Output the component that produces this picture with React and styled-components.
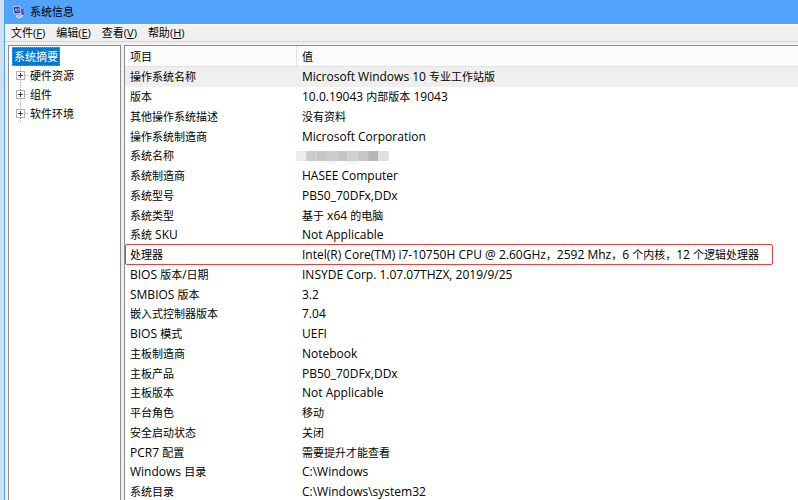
import React from "react";
import styled, { createGlobalStyle } from "styled-components";

const GlobalStyle = createGlobalStyle`
  * {
    box-sizing: border-box;
  }

  body {
    margin: 0;
    overflow: hidden;
    background: #fff;
  }
`

const Desktop = styled.div`
  display: flex;
  height: 100vh;
  overflow: hidden;
  padding-left: 4px;
  background: #cfe0f2;
  color: #000;
  font-family: "Open Sans", "Noto Sans CJK SC", sans-serif;
  font-size: 12px;
  line-height: 16px;
`

const Window = styled.div`
  flex: 1;
  min-width: 0;
  display: flex;
  flex-direction: column;
  border-left: 1px solid #4c9be8;
  background: #f0f0f0;
`

const TitleBar = styled.header`
  display: flex;
  align-items: center;
  gap: 5px;
  height: 24px;
  padding-left: 7px;
  background: #52a3fb;
`

const Title = styled.h1`
  margin: 0;
  font-size: 11px;
  font-weight: 400;
`

const MenuBar = styled.nav`
  display: flex;
  gap: 11px;
  height: 18px;
  padding-left: 6px;
  border-top: 1px solid #f8fbfd;
  border-bottom: 1px solid #d4d4d4;
`

const MenuButton = styled.button`
  padding: 0;
  border: 0;
  background: none;
  color: inherit;
  font: inherit;
  font-size: 11px;
  line-height: 16px;
`

const Panes = styled.div`
  flex: 1;
  min-height: 0;
  display: flex;
  gap: 3px;
  padding: 3px 0 0 3px;
`

const TreePane = styled.aside`
  flex: none;
  width: 113px;
  padding: 1px 3px;
  border: 1px solid #8c8c8c;
  border-bottom: 0;
  background: #fff;
`

const RootItem = styled.button`
  display: block;
  height: 19px;
  padding: 0 1px;
  border: 1px dotted #d08a3c;
  background: #0078d7;
  color: #fff;
  font: inherit;
  font-size: 11px;
  line-height: 17px;
`

const Branches = styled.ul`
  margin: 0;
  padding: 0 0 0 3px;
  list-style: none;
`

const Branch = styled.li`
  display: flex;
  align-items: center;
  gap: 1px;
  height: 19px;
  font-size: 11px;
`

const Expander = styled.button`
  display: flex;
  padding: 0;
  border: 0;
  background: none;
`

const ListPane = styled.main`
  flex: 1;
  min-width: 0;
  overflow: hidden;
  border: 1px solid #8c8c8c;
  border-right: 0;
  border-bottom: 0;
  background: #fff;
`

const Table = styled.table`
  width: 100%;
  border-collapse: separate;
  border-spacing: 0;
  table-layout: fixed;
  text-align: left;
`

const HeadCell = styled.th`
  width: ${props => props.$width || "auto"};
  height: 21px;
  padding: 2px 5px 0;
  border-bottom: 1px solid #e2e2e2;
  border-right: ${props => props.$width ? "1px solid #e0e0e0" : "0"};
  background: #fcfcfc;
  font-weight: 400;
  font-size: 11px;
`

const Row = styled.tr`
  position: relative;
  height: 20px;
  background: ${props => props.$selected ? "#efefef" : "transparent"};

  &:nth-child(4n) {
    height: 19px;
  }
`

const Cell = styled.td`
  padding: 0 5px;
  white-space: nowrap;
  font-size: 11px;
  line-height: 16px;
`

const Latin = styled.span`
  font-size: 12px;
`

const Marker = styled.span`
  position: absolute;
  inset: -1px 25px 0 0;
  border: 1px solid #e8403a;
  border-radius: 2px;
  pointer-events: none;
`

const Mosaic = styled.svg`
  display: block;
  margin-left: -6px;
`

const menus = [
  ["文件", "F"],
  ["编辑", "E"],
  ["查看", "V"],
  ["帮助", "H"],
]

const branches = ["硬件资源", "组件", "软件环境"]

const rows = [
  { item: "操作系统名称", value: "Microsoft Windows 10 专业工作站版", selected: true },
  { item: "版本", value: "10.0.19043 内部版本 19043" },
  { item: "其他操作系统描述", value: "没有资料" },
  { item: "操作系统制造商", value: "Microsoft Corporation" },
  { item: "系统名称", hidden: true },
  { item: "系统制造商", value: "HASEE Computer" },
  { item: "系统型号", value: "PB50_70DFx,DDx" },
  { item: "系统类型", value: "基于 x64 的电脑" },
  { item: "系统 SKU", value: "Not Applicable" },
  { item: "处理器", value: "Intel(R) Core(TM) i7-10750H CPU @ 2.60GHz，2592 Mhz，6 个内核，12 个逻辑处理器", marked: true },
  { item: "BIOS 版本/日期", value: "INSYDE Corp. 1.07.07THZX, 2019/9/25" },
  { item: "SMBIOS 版本", value: "3.2" },
  { item: "嵌入式控制器版本", value: "7.04" },
  { item: "BIOS 模式", value: "UEFI" },
  { item: "主板制造商", value: "Notebook" },
  { item: "主板产品", value: "PB50_70DFx,DDx" },
  { item: "主板版本", value: "Not Applicable" },
  { item: "平台角色", value: "移动" },
  { item: "安全启动状态", value: "关闭" },
  { item: "PCR7 配置", value: "需要提升才能查看" },
  { item: "Windows 目录", value: "C:\\Windows" },
  { item: "系统目录", value: "C:\\Windows\\system32" },
]

const mosaicColors = ["#ececec", "#cbcbcb", "#c6c6c8", "#cdcdce", "#c4c4c6", "#d0d0d3", "#c9c5c1", "#b4b6b9", "#dfe2e4"]

// Latin runs are set one size larger than the Chinese text
const MixedText = ({ text }) => (
  text.split(/([\x20-\x7e]+)/).map((part, i) => (
    i % 2 ? <Latin key={i}>{part}</Latin> : part
  ))
)

const AppIcon = () => (
  <svg width="13" height="14" viewBox="0 0 13 14" aria-hidden="true">
    <path d="M0.500 1.500L8 0.500l1.500 8-7.500 1z" fill="#c9d3ec" />
    <path d="M1.500 2.300l5.800-.8 1.200 6.300-6 .8z" fill="#2b2fa8" />
    <path d="M2.500 6.500l1.500-3 1.500 3.500M6 3l1.300 3.500" stroke="#a9c4ff" fill="none" />
    <path d="M9 3.500l2.500 1 .5 6-2.500-.5z" fill="#5d4fa6" />
    <path d="M4 10.500l5-1.200 3 1.500-4.500 2.700-3.500-1.500z" fill="#dadde6" />
    <path d="M5.500 11.500l4-1" stroke="#9298b0" />
  </svg>
)

const PlusIcon = () => (
  <svg width="14" height="19" viewBox="0 0 14 19" shapeRendering="crispEdges" aria-hidden="true">
    <path d="M5.500 0v19M6 9.500h8" stroke="#b0b0b0" strokeDasharray="1 1" />
    <rect x="1.500" y="5.500" width="8" height="8" fill="#fff" stroke="#b0b0b0" />
    <path d="M3 9.500h5M5.500 7v5" stroke="#444" />
  </svg>
)

class App extends React.Component {
  renderValue = (row) => {
    if (row.hidden) {
      return (
        <Mosaic width="94" height="16" viewBox="0 0 94 16" role="img" aria-label="已隐藏">
          {mosaicColors.map((color, i) => (
            <rect key={i} x={i * 10.3} y="3" width="10.300" height="10" fill={color} />
          ))}
          <path d="M31 13h10v3h-10zM51 13h10v3h-10z" fill="#f4f4f4" />
        </Mosaic>
      )
    }
    return <MixedText text={row.value} />
  }

  render() {
    return (
      <>
        <GlobalStyle />
        <Desktop>
          <Window>
            <TitleBar>
              <AppIcon />
              <Title>系统信息</Title>
            </TitleBar>
            <MenuBar>
              {menus.map(([label, accessKey]) => (
                <MenuButton key={accessKey} type="button">{label}(<u>{accessKey}</u>)</MenuButton>
              ))}
            </MenuBar>
            <Panes>
              <TreePane>
                <RootItem type="button">系统摘要</RootItem>
                <Branches>
                  {branches.map(name => (
                    <Branch key={name}>
                      <Expander type="button" aria-label={`展开 ${name}`}><PlusIcon /></Expander>
                      {name}
                    </Branch>
                  ))}
                </Branches>
              </TreePane>
              <ListPane>
                <Table>
                  <thead>
                    <tr>
                      <HeadCell $width="172px">项目</HeadCell>
                      <HeadCell>值</HeadCell>
                    </tr>
                  </thead>
                  <tbody>
                    {rows.map(row => (
                      <Row key={row.item} $selected={row.selected}>
                        <Cell><MixedText text={row.item} /></Cell>
                        <Cell>
                          {this.renderValue(row)}
                          {row.marked && <Marker />}
                        </Cell>
                      </Row>
                    ))}
                  </tbody>
                </Table>
              </ListPane>
            </Panes>
          </Window>
        </Desktop>
      </>
    )
  }
}

export default App;
